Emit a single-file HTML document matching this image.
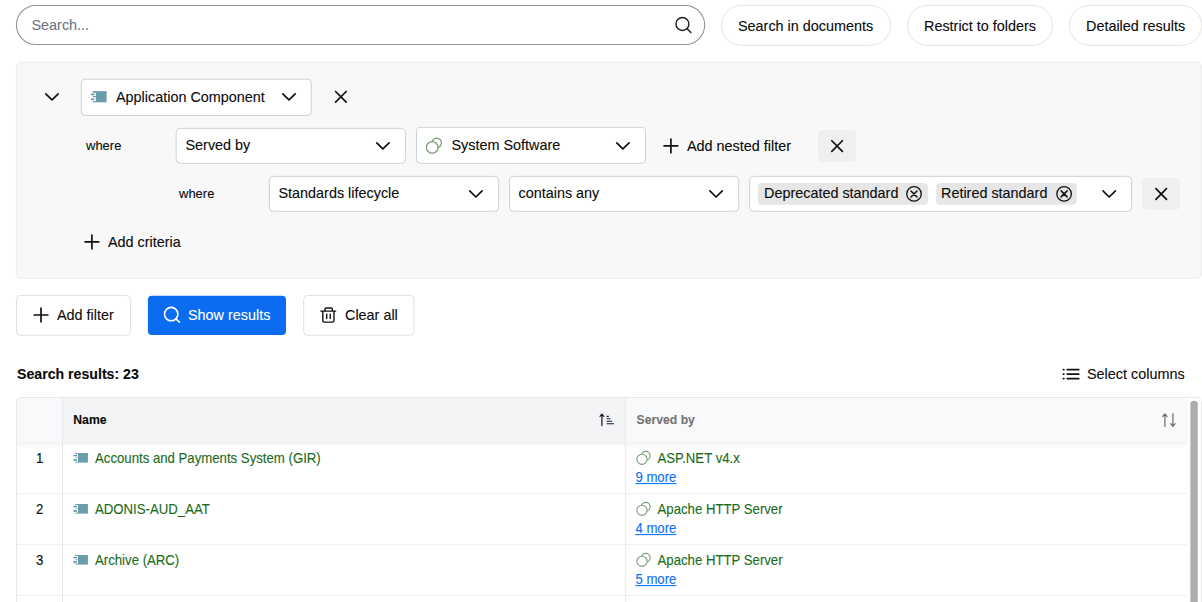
<!DOCTYPE html>
<html lang="en">
<head>
<meta charset="utf-8">
<title>Search</title>
<style>
*{box-sizing:border-box;margin:0;padding:0}
html,body{width:1202px;height:602px;overflow:hidden;background:#fff}
body{font-family:"Liberation Sans",Arial,sans-serif;font-size:14.4px;color:#111;position:relative}
#bg{position:absolute;left:0;top:0}
.ic{fill:none;stroke:#111;stroke-width:1.7;stroke-linecap:round;stroke-linejoin:round}
.sel{fill:#fff;stroke:#cad2db;stroke-width:1}
.t{position:absolute;white-space:nowrap;font-size:14.4px;line-height:18px;color:#0a0a0a;-webkit-text-stroke:0.1px currentColor}
.s{font-size:13px;transform:scaleY(1.05);transform-origin:0 13px}
.b14{font-size:14.15px;font-weight:bold}
.h{font-size:12.2px;font-weight:bold;line-height:16px}
.c{font-size:13.2px;line-height:16px;transform:scaleY(1.06);transform-origin:0 12px}
.g{color:#1a6b1a}
.m{color:#0d6efd;text-decoration:underline}
</style>
</head>
<body>
<svg id="bg" width="1202" height="602" viewBox="0 0 1202 602">
<rect x="16.45" y="5.45" width="688.2" height="39.05" rx="19.5" fill="#fff" stroke="#929292" stroke-width="1.05"/>
<circle cx="682.45" cy="24" r="6.5" fill="none" stroke="#1a1a1a" stroke-width="1.4"/><path d="M687.1 28.65 L690.9 32.45" stroke="#1a1a1a" stroke-width="1.4" stroke-linecap="round"/>
<rect x="721.5" y="5.4" width="169.0" height="39.9" rx="19.95" fill="#fff" stroke="#e3e3e3"/>
<rect x="907.5" y="5.4" width="145.1" height="39.9" rx="19.95" fill="#fff" stroke="#e3e3e3"/>
<rect x="1069.5" y="5.4" width="132.2" height="39.9" rx="19.95" fill="#fff" stroke="#e3e3e3"/>
<rect x="16.4" y="62.3" width="1185" height="216" rx="4.5" fill="#f8f8f8" stroke="#ebebeb"/>
<path d="M45.80 93.80 L52.00 99.90 L58.20 93.80" class="ic"/>
<rect x="81.3" y="79.2" width="230.00" height="36.30" rx="4" class="sel"/>
<path d="M282.80 93.80 L289.00 99.90 L295.20 93.80" class="ic"/>
<rect x="95.90" y="91.15" width="10.70" height="11.15" fill="#699dab"/><rect x="92.80" y="91.15" width="3.20" height="1.65" fill="#699dab" opacity="1"/><rect x="92.80" y="96.00" width="3.20" height="1.10" fill="#699dab" opacity="1"/><rect x="92.80" y="101.10" width="3.20" height="1.20" fill="#699dab" opacity="1"/><rect x="90.80" y="93.00" width="4.30" height="2.80" fill="#699dab" opacity=".22"/><rect x="91.00" y="93.80" width="3.10" height="1.20" fill="#5a93a3"/><rect x="90.80" y="97.80" width="4.30" height="2.80" fill="#699dab" opacity=".22"/><rect x="91.00" y="98.60" width="3.10" height="1.20" fill="#5a93a3"/>
<path d="M335.60 91.50 L346.20 102.10 M346.20 91.50 L335.60 102.10" class="ic"/>
<rect x="176.2" y="128.35" width="229.20" height="34.95" rx="4" class="sel"/>
<path d="M376.70 142.80 L382.90 148.90 L389.10 142.80" class="ic"/>
<rect x="416.5" y="127.35" width="229.00" height="35.95" rx="4" class="sel"/>
<path d="M616.70 142.80 L622.90 148.90 L629.10 142.80" class="ic"/>
<circle cx="436.7" cy="142.9" r="4.75" fill="none" stroke="#789e76" stroke-width="1.25"/><circle cx="432.2" cy="147.4" r="5.8" fill="#fff" stroke="#789e76" stroke-width="1.25"/>
<path d="M670.90 139.10 V152.70 M664.10 145.90 H677.70" class="ic"/>
<rect x="818" y="130.1" width="38.1" height="31.6" rx="4" fill="#f0eeee"/>
<path d="M831.80 140.75 L842.40 151.35 M842.40 140.75 L831.80 151.35" class="ic"/>
<rect x="269.4" y="176.35" width="229.15" height="34.95" rx="4" class="sel"/>
<path d="M469.70 190.90 L475.90 197.00 L482.10 190.90" class="ic"/>
<rect x="509.5" y="176.35" width="229.20" height="34.95" rx="4" class="sel"/>
<path d="M709.90 190.90 L716.10 197.00 L722.30 190.90" class="ic"/>
<rect x="749.7" y="176.35" width="381.90" height="34.95" rx="4" class="sel"/>
<path d="M1103.00 190.90 L1109.20 197.00 L1115.40 190.90" class="ic"/>
<rect x="758" y="183" width="169.9" height="21.7" rx="4" fill="#e6e6e6"/>
<circle cx="914" cy="193.95" r="7.25" fill="none" stroke="#111" stroke-width="1.3"/><path d="M911.0 190.95 L917.0 196.95 M917.0 190.95 L911.0 196.95" stroke="#111" stroke-width="1.5" stroke-linecap="round" fill="none"/>
<rect x="936.2" y="183" width="140.5" height="21.7" rx="4" fill="#e6e6e6"/>
<circle cx="1064.1" cy="193.9" r="7.25" fill="none" stroke="#111" stroke-width="1.3"/><path d="M1061.1 190.9 L1067.1 196.9 M1067.1 190.9 L1061.1 196.9" stroke="#111" stroke-width="1.5" stroke-linecap="round" fill="none"/>
<rect x="1142" y="178.1" width="37.9" height="31.4" rx="4" fill="#f0eeee"/>
<path d="M1155.90 188.70 L1166.50 199.30 M1166.50 188.70 L1155.90 199.30" class="ic"/>
<path d="M91.90 235.10 V248.70 M85.10 241.90 H98.70" class="ic"/>
<rect x="16.5" y="295.4" width="114" height="39.9" rx="4" fill="#fff" stroke="#e0e0e0"/>
<path d="M41.00 308.20 V321.80 M34.20 315.00 H47.80" class="ic"/>
<rect x="147.9" y="295.8" width="138.1" height="39.3" rx="4" fill="#0b6cf2"/>
<circle cx="171.2" cy="314.1" r="6.7" fill="none" stroke="#fff" stroke-width="1.6"/><path d="M175.95 318.85 L179.5 322.1" stroke="#fff" stroke-width="1.6" stroke-linecap="round"/>
<rect x="303.7" y="295.4" width="110.3" height="39.9" rx="4" fill="#fff" stroke="#e0e0e0"/>
<path d="M320.9 311.15 H335.6 M324.9 311 V309.4 Q324.9 308 326.3 308 H331 Q332.4 308 332.4 309.4 V311 M322.8 311.2 V320.6 Q322.8 322.1 324.3 322.1 H332.5 Q334 322.1 334 320.6 V311.2 M326.7 314.3 V318.6 M330.2 314.3 V318.6" fill="none" stroke="#111" stroke-width="1.4" stroke-linecap="round" stroke-linejoin="round"/>
<path d="M1067.2 369.6 H1078.8 M1067.2 374.1 H1078.8 M1067.2 378.6 H1078.8 M1063.4 369.6 H1063.9 M1063.4 374.1 H1063.9 M1063.4 378.6 H1063.9" fill="none" stroke="#111" stroke-width="1.7" stroke-linecap="round"/>
<defs><linearGradient id="sh" x1="0" y1="0" x2="0" y2="1"><stop offset="0" stop-color="#000" stop-opacity=".055"/><stop offset=".5" stop-color="#000" stop-opacity=".02"/><stop offset="1" stop-color="#000" stop-opacity="0"/></linearGradient><clipPath id="tc"><rect x="16.5" y="397.5" width="1185" height="230" rx="4.5"/></clipPath></defs>
<g clip-path="url(#tc)">
<rect x="16.5" y="397.5" width="1171" height="45" fill="#f8f9fa"/>
<rect x="62.5" y="397.5" width="563" height="45" fill="#f3f4f6"/>
<rect x="17.5" y="442.3" width="1169.5" height="6" fill="url(#sh)"/>
</g>
<path d="M17 493.6 H1187" stroke="#eeeff2" stroke-width="1"/>
<path d="M17 544.6 H1187" stroke="#eeeff2" stroke-width="1"/>
<path d="M17 595.6 H1187" stroke="#eeeff2" stroke-width="1"/>
<path d="M62.5 398 V602 M625.3 398 V602" stroke="#e8e9ed" stroke-width="1"/>
<rect x="16.5" y="397.5" width="1185" height="230" rx="4.5" fill="none" stroke="#e6e8ea"/>
<path d="M601.9 425.6 V414.3 M600 416.4 L601.9 414.2 L603.8 416.4" fill="none" stroke="#15152a" stroke-width="1.2" stroke-linecap="round" stroke-linejoin="round"/>
<path d="M606.6 416.4 H608.8 M606.6 418.8 H610.4 M606.6 421.2 H612.2 M606.6 423.7 H613.9" fill="none" stroke="#15152a" stroke-width="1.1"/>
<path d="M1164.9 426.5 V414 M1162.7 416.6 L1164.9 413.8 L1167.1 416.6 M1172.9 413.6 V426 M1170.7 423.6 L1172.9 426.4 L1175.1 423.6" fill="none" stroke="#6d6d6d" stroke-width="1.2" stroke-linecap="round" stroke-linejoin="round"/>
<path d="M1190.4 602 V404.4 A3.7 3.7 0 0 1 1197.8 404.4 V602 Z" fill="#adadad"/>
<rect x="78.00" y="453.00" width="9.90" height="9.60" fill="#699dab"/><rect x="75.10" y="453.00" width="3.00" height="0.90" fill="#699dab" opacity="1"/><rect x="75.10" y="457.10" width="3.00" height="0.80" fill="#699dab" opacity="0.6"/><rect x="75.10" y="461.80" width="3.00" height="0.80" fill="#699dab" opacity="1"/><rect x="73.30" y="454.20" width="3.90" height="2.70" fill="#699dab" opacity=".22"/><rect x="73.50" y="455.00" width="3.50" height="1.10" fill="#5a93a3"/><rect x="73.30" y="458.40" width="3.90" height="3.10" fill="#699dab" opacity=".22"/><rect x="73.50" y="459.20" width="3.50" height="1.50" fill="#5a93a3"/>
<circle cx="645.8" cy="455.7" r="4.35" fill="none" stroke="#789e76" stroke-width="1.1"/><circle cx="642" cy="459.3" r="5.1" fill="#fff" stroke="#789e76" stroke-width="1.1"/>
<rect x="78.00" y="504.00" width="9.90" height="9.60" fill="#699dab"/><rect x="75.10" y="504.00" width="3.00" height="0.90" fill="#699dab" opacity="1"/><rect x="75.10" y="508.10" width="3.00" height="0.80" fill="#699dab" opacity="0.6"/><rect x="75.10" y="512.80" width="3.00" height="0.80" fill="#699dab" opacity="1"/><rect x="73.30" y="505.20" width="3.90" height="2.70" fill="#699dab" opacity=".22"/><rect x="73.50" y="506.00" width="3.50" height="1.10" fill="#5a93a3"/><rect x="73.30" y="509.40" width="3.90" height="3.10" fill="#699dab" opacity=".22"/><rect x="73.50" y="510.20" width="3.50" height="1.50" fill="#5a93a3"/>
<circle cx="645.8" cy="506.7" r="4.35" fill="none" stroke="#789e76" stroke-width="1.1"/><circle cx="642" cy="510.3" r="5.1" fill="#fff" stroke="#789e76" stroke-width="1.1"/>
<rect x="78.00" y="555.00" width="9.90" height="9.60" fill="#699dab"/><rect x="75.10" y="555.00" width="3.00" height="0.90" fill="#699dab" opacity="1"/><rect x="75.10" y="559.10" width="3.00" height="0.80" fill="#699dab" opacity="0.6"/><rect x="75.10" y="563.80" width="3.00" height="0.80" fill="#699dab" opacity="1"/><rect x="73.30" y="556.20" width="3.90" height="2.70" fill="#699dab" opacity=".22"/><rect x="73.50" y="557.00" width="3.50" height="1.10" fill="#5a93a3"/><rect x="73.30" y="560.40" width="3.90" height="3.10" fill="#699dab" opacity=".22"/><rect x="73.50" y="561.20" width="3.50" height="1.50" fill="#5a93a3"/>
<circle cx="645.8" cy="557.7" r="4.35" fill="none" stroke="#789e76" stroke-width="1.1"/><circle cx="642" cy="561.3" r="5.1" fill="#fff" stroke="#789e76" stroke-width="1.1"/>
</svg>
<div id="t_search" class="t " style="left:31.5px;top:16px;color:#6e7781">Search...</div>
<div id="t_p1" class="t " style="left:738px;top:17px;">Search in documents</div>
<div id="t_p2" class="t " style="left:924px;top:17px;">Restrict to folders</div>
<div id="t_p3" class="t " style="left:1086px;top:17px;">Detailed results</div>
<div id="t_app" class="t " style="left:116px;top:88px;">Application Component</div>
<div id="t_w1" class="t s" style="left:86px;top:137px;">where</div>
<div id="t_served" class="t " style="left:185.5px;top:136px;">Served by</div>
<div id="t_sys" class="t " style="left:451.5px;top:136px;">System Software</div>
<div id="t_anf" class="t " style="left:687px;top:137px;">Add nested filter</div>
<div id="t_w2" class="t s" style="left:179px;top:185px;">where</div>
<div id="t_std" class="t " style="left:278.5px;top:184px;">Standards lifecycle</div>
<div id="t_cont" class="t " style="left:518.5px;top:184px;">contains any</div>
<div id="t_dep" class="t " style="left:764px;top:184px;">Deprecated standard</div>
<div id="t_ret" class="t " style="left:941px;top:184px;">Retired standard</div>
<div id="t_addc" class="t " style="left:108px;top:233px;">Add criteria</div>
<div id="t_addf" class="t " style="left:57px;top:306px;">Add filter</div>
<div id="t_show" class="t " style="left:188px;top:306px;color:#fff">Show results</div>
<div id="t_clear" class="t " style="left:345px;top:306px;">Clear all</div>
<div id="t_res" class="t b14" style="left:17px;top:365px;">Search results: 23</div>
<div id="t_selc" class="t " style="left:1087px;top:365px;">Select columns</div>
<div id="t_name" class="t h" style="left:73.3px;top:412px;">Name</div>
<div id="t_sb" class="t h" style="left:636.6px;top:412px;color:#747474">Served by</div>
<div id="t_n0" class="t c" style="left:36px;top:451px;">1</div>
<div id="t_a0" class="t c g" style="left:95px;top:451px;">Accounts and Payments System (GIR)</div>
<div id="t_b0" class="t c g" style="left:657.5px;top:451px;">ASP.NET v4.x</div>
<div id="t_c0" class="t c m" style="left:635.4px;top:470px;">9 more</div>
<div id="t_n1" class="t c" style="left:36px;top:502px;">2</div>
<div id="t_a1" class="t c g" style="left:95px;top:502px;">ADONIS-AUD_AAT</div>
<div id="t_b1" class="t c g" style="left:657.5px;top:502px;">Apache HTTP Server</div>
<div id="t_c1" class="t c m" style="left:635.4px;top:521px;">4 more</div>
<div id="t_n2" class="t c" style="left:36px;top:553px;">3</div>
<div id="t_a2" class="t c g" style="left:95px;top:553px;">Archive (ARC)</div>
<div id="t_b2" class="t c g" style="left:657.5px;top:553px;">Apache HTTP Server</div>
<div id="t_c2" class="t c m" style="left:635.4px;top:572px;">5 more</div>
</body>
</html>
